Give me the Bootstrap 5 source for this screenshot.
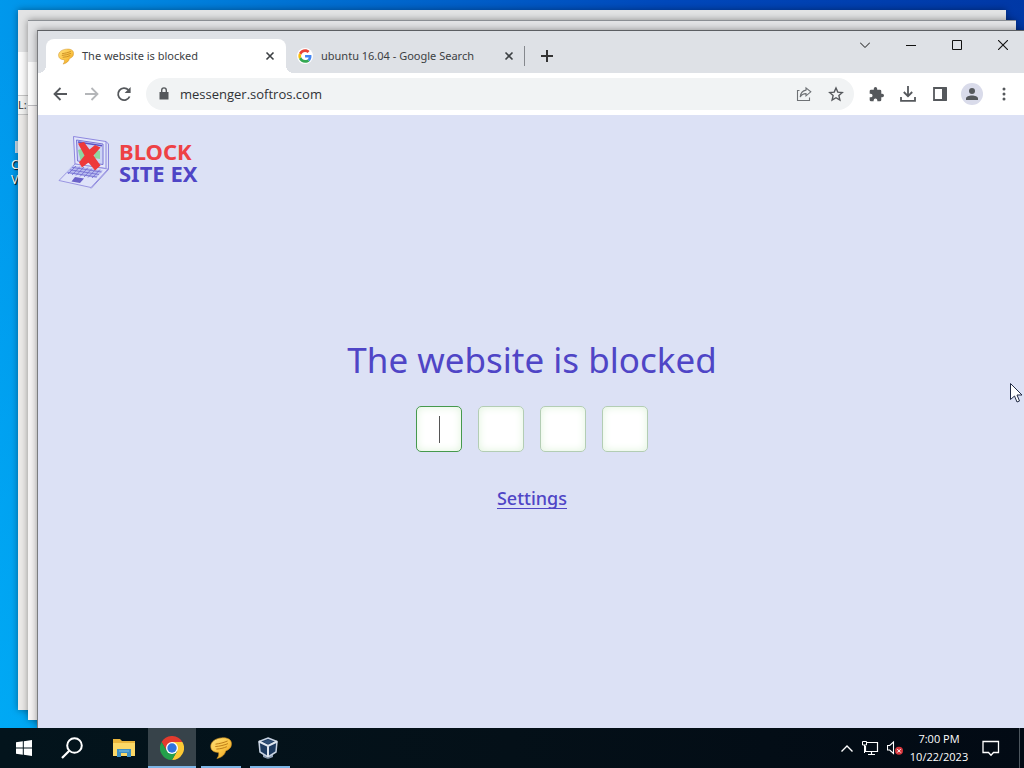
<!DOCTYPE html>
<html lang="en">
<head>
<meta charset="utf-8">
<meta name="viewport" content="width=device-width, initial-scale=1">
<title>The website is blocked</title>
<link href="https://cdn.jsdelivr.net/npm/bootstrap@5.3.0/dist/css/bootstrap.min.css" rel="stylesheet">
<style>
  :root { --brand: #4f45c6; }
  body { font-family: "Noto Sans", "Open Sans", sans-serif; font-size: 11px; line-height: 16px; color: #3c4043; }
  svg { display: block; flex: none; }
  button { border: 0; background: none; padding: 0; color: inherit; }

  /* desktop and the windows lying on it */
  .desktop { background: linear-gradient(180deg, transparent 30px, rgba(0,190,255,.45)), linear-gradient(90deg, #0098ec, #0070d2 30%, #0048bb 65%, #0038a6); }
  .desk-label { left: 11px; top: 157px; color: #fff; font-size: 12px; line-height: 15px; text-shadow: 1px 1px 1px #000; }
  .desk-icon { left: 15px; top: 141px; width: 8px; height: 12px; background: #c9dcec; }
  .win { box-shadow: 0 0 7px rgba(0,0,0,.4); }
  .win-a { inset: 10px 18px 18px 18px; background: linear-gradient(#e2e3e4 42px, #fbfbfb 42px 85px, #c4c4c4 85px 86px, #f2f2f1 86px 104px, #c4c4c4 104px 105px, #ebe9e7 105px); padding-top: 87px; color: #333; }
  .win-b { inset: 20px 8px 8px 28px; border-top: 1px solid #8b8f94; background: linear-gradient(#e2e3e5 41px, #fbfbfb 41px 84px, #bcbcc0 84px 85px, #f5f3f3 85px); }
  .win-front { inset: 30px -2px 0 37px; border-top: 1px solid #5c5f63; border-left: 1px solid #7b7d80; background: #dce1f5; }

  /* browser chrome */
  .tabstrip { height: 42px; background: #dee1e6; padding: 8px 0 0 8px; }
  .tab { height: 34px; position: relative; }
  .tab-active { width: 240px; padding: 0 7px 0 12px; background: #fff; border-radius: 8px 8px 0 0; }
  .tab-active::before, .tab-active::after { content: ""; position: absolute; bottom: 0; width: 8px; height: 8px; }
  .tab-active::before { left: -8px; background: radial-gradient(circle at 0 0, transparent 8px, #fff 8px); }
  .tab-active::after { right: -8px; background: radial-gradient(circle at 100% 0, transparent 8px, #fff 8px); }
  .tab-idle { width: 239px; padding: 0 7px 0 11px; }
  .tab-idle::after { content: ""; position: absolute; right: 0; top: 7px; height: 20px; width: 1px; background: #85888d; }
  .tab-new { width: 28px; height: 34px; margin-left: 8px; color: #333; }
  .win-ctl { margin-top: -8px; }
  .win-ctl button { width: 46px; height: 28px; color: #111; }
  .tools { height: 42px; background: #fff; padding: 0 6px; }
  .tool { width: 32px; height: 32px; color: #55585c; flex: none; }
  .address { height: 32px; background: #f1f3f4; border-radius: 16px; margin: 0 6px; padding: 0 2px 0 10px; }
  .address input { background: none; border: 0; outline: 0; font-family: "Open Sans", "Noto Sans", sans-serif; font-size: 13px; line-height: 20px; color: #303236; padding: 0; margin-left: 8px; min-width: 0; }
  .avatar { width: 22px; height: 22px; background: #d9dbea; }

  /* blocked page */
  .site-head { height: 80px; padding: 20px 20px 0; }
  .site-name { font-family: "Noto Sans", sans-serif; font-weight: 700; font-size: 22px; line-height: 22px; margin-left: 9px; padding-top: 5px; color: var(--brand); }
  .site-name .word-block { color: #ee4145; }
  .blocked { padding: 2px 0 80px; color: var(--brand); }
  .blocked h1 { font-family: "Noto Sans", sans-serif; font-weight: 400; font-size: 35px; line-height: 48px; margin: 0 0 22px; }
  .pin { width: 46px; height: 46px; border: 1px solid #b3cdb4; border-radius: 5px; background: #fff; box-shadow: inset 0 0 8px #dff3dc; text-align: center; outline: 0; }
  .pin-now { border-color: #46994d; background: linear-gradient(#555, #555) center / 1px 27px no-repeat #fff; }
  .settings { font-family: "Noto Sans", sans-serif; font-weight: 500; font-size: 18px; line-height: 20px; margin-top: 36px; color: var(--brand); text-decoration: none; border-bottom: 1px solid; }

  /* taskbar */
  .taskbar { height: 40px; background: linear-gradient(90deg, #03141c, #041018 50%, #020a14); color: #fff; font-family: "Open Sans", "Noto Sans", sans-serif; }
  .task { width: 48px; height: 40px; flex: none; position: relative; }
  .task-run + .task-run { margin-left: 1px; }
  .task-run::after { content: ""; position: absolute; left: 4px; right: 4px; bottom: 0; height: 2px; background: #7db5e6; }
  .task-on { background: #37434a; }
  .task-on::after { left: 0; right: 0; }
  .clock { width: 62px; line-height: 18px; margin-right: 8px; }
  .peek { width: 5px; height: 40px; border-left: 1px solid #4d565e; margin-left: 19px; }
  .pointer { left: 1009px; top: 382px; }
</style>
</head>
<body class="vh-100 overflow-hidden d-flex flex-column">

<svg width="0" height="0" class="position-absolute" aria-hidden="true">
  <defs>
    <linearGradient id="gold" x1="0" y1="0" x2="1" y2="1"><stop offset="0" stop-color="#ffe07a"/><stop offset=".55" stop-color="#fbc544"/><stop offset="1" stop-color="#e79a1c"/></linearGradient>
    <symbol id="bubble" viewBox="0 0 20 20">
      <path d="M10.500 .8C16 .3 19.600 2.300 19.500 6.300C19.400 10 17 11.600 14.200 12.700C13.700 15.600 11.200 18.500 6.300 19.500C8 17.500 8.300 15.600 7.800 14C3.200 14 .7 12.100.7 8.400C.7 4.500 4.600 1.300 10.500.8Z" fill="url(#gold)" stroke="#d0901f" stroke-width=".6"/>
      <path d="M5 6.500C9 6 13 5 16 3.600M4.800 8.700C9 8.400 13 7.400 16.300 6M5.800 11C9.500 10.800 12.500 10 15.300 8.800" fill="none" stroke="#bd7d18" stroke-width=".9"/>
    </symbol>
    <symbol id="x" viewBox="0 0 10 10"><path d="M1.500 1.500l7 7M8.500 1.500l-7 7" stroke="#3c4043" stroke-width="1.600"/></symbol>
  </defs>
</svg>

<main class="desktop flex-grow-1 position-relative overflow-hidden">
  <div class="desk-icon position-absolute"></div>
  <div class="desk-label position-absolute">C<br>V</div>
  <div class="win win-a position-absolute">L:</div>
  <div class="win win-b position-absolute"></div>

  <section class="win win-front position-absolute d-flex flex-column">
    <div class="tabstrip d-flex">
      <div class="tab tab-active d-flex align-items-center">
        <svg width="16" height="17"><use href="#bubble"/></svg>
        <span class="flex-grow-1 ms-2 text-nowrap">The website is blocked</span>
        <button aria-label="Close tab" class="p-1"><svg width="10" height="10"><use href="#x"/></svg></button>
      </div>
      <div class="tab tab-idle d-flex align-items-center">
        <svg width="16" height="16" viewBox="0 0 48 48"><circle cx="24" cy="24" r="24" fill="#fff"/><g transform="translate(4 4) scale(.84)"><path fill="#EA4335" d="M24 9.500c3.540 0 6.710 1.220 9.210 3.600l6.850-6.850C35.900 2.380 30.470 0 24 0 14.620 0 6.510 5.380 2.560 13.220l7.980 6.190C12.430 13.720 17.740 9.500 24 9.500z"/><path fill="#4285F4" d="M46.980 24.550c0-1.570-.15-3.090-.38-4.550H24v9.020h12.940c-.58 2.960-2.260 5.480-4.780 7.180l7.730 6c4.510-4.180 7.090-10.360 7.090-17.650z"/><path fill="#FBBC05" d="M10.530 28.590c-.48-1.450-.76-2.990-.76-4.590s.27-3.140.76-4.590l-7.980-6.190C.92 16.460 0 20.120 0 24c0 3.880.92 7.540 2.560 10.780l7.970-6.190z"/><path fill="#34A853" d="M24 48c6.480 0 11.930-2.130 15.890-5.810l-7.730-6c-2.150 1.450-4.920 2.300-8.160 2.300-6.260 0-11.570-4.220-13.470-9.910l-7.980 6.190C6.510 42.620 14.620 48 24 48z"/></g></svg>
        <span class="flex-grow-1 ms-2 text-nowrap">ubuntu 16.04 - Google Search</span>
        <button aria-label="Close tab" class="p-1"><svg width="10" height="10"><use href="#x"/></svg></button>
      </div>
      <button class="tab-new d-flex align-items-center justify-content-center" aria-label="New tab"><svg width="12" height="12"><path d="M6 0v12M0 6h12" stroke="currentColor" stroke-width="2"/></svg></button>
      <div class="win-ctl d-flex ms-auto">
        <button class="d-flex align-items-center justify-content-center" aria-label="Search tabs"><svg width="10" height="6"><path d="M0 .5l5 5 5-5" fill="none" stroke="currentColor"/></svg></button>
        <button class="d-flex align-items-center justify-content-center" aria-label="Minimize"><svg width="10" height="1"><path d="M0 .5h10" stroke="currentColor"/></svg></button>
        <button class="d-flex align-items-center justify-content-center" aria-label="Maximize"><svg width="10" height="10"><path d="M.5.5h9v9h-9z" fill="none" stroke="currentColor"/></svg></button>
        <button class="d-flex align-items-center justify-content-center" aria-label="Close"><svg width="10" height="10"><path d="M0 0l10 10M10 0L0 10" stroke="currentColor" stroke-width="1.100"/></svg></button>
      </div>
    </div>

    <div class="tools d-flex align-items-center">
      <button class="tool d-flex align-items-center justify-content-center" aria-label="Back"><svg width="14" height="14"><path d="M14 7H1.500M7.500 1L1.500 7l6 6" fill="none" stroke="currentColor" stroke-width="1.800"/></svg></button>
      <button class="tool d-flex align-items-center justify-content-center" aria-label="Forward" disabled><svg width="14" height="14"><path d="M0 7h12.500M6.500 1l6 6-6 6" fill="none" stroke="#b4b6b9" stroke-width="1.800"/></svg></button>
      <button class="tool d-flex align-items-center justify-content-center" aria-label="Reload"><svg width="16" height="16"><path d="M13.600 10.500A6 6 0 1 1 12.400 3.900" fill="none" stroke="currentColor" stroke-width="1.800"/><path d="M14.600 1v6H8.600z" fill="currentColor"/></svg></button>
      <div class="address d-flex align-items-center flex-grow-1">
        <svg width="16" height="16"><path d="M3.500 6h9v7.500h-9z" fill="#55585c"/><path d="M5.700 7V4.200a2.300 2.300 0 0 1 4.600 0V7" fill="none" stroke="#55585c" stroke-width="1.400"/></svg>
        <input type="text" class="flex-grow-1" aria-label="Address" value="messenger.softros.com">
        <button class="tool d-flex align-items-center justify-content-center" aria-label="Share"><svg width="16" height="16"><path d="M3.500 4.500H1.500v10h12v-3M10 1.800l4.800 4-4.800 4V7.600C7.500 7.600 5.500 8.500 4.200 11 4.600 7 7 4.500 10 4.100z" fill="none" stroke="#6e7175" stroke-width="1.100"/></svg></button>
        <button class="tool d-flex align-items-center justify-content-center" aria-label="Bookmark"><svg width="16" height="16"><path d="M8 2l1.800 4.100 4.500.5-3.400 3 1 4.400L8 11.700 4.100 14l1-4.400-3.400-3 4.500-.5z" fill="none" stroke="currentColor" stroke-width="1.400"/></svg></button>
      </div>
      <button class="tool d-flex align-items-center justify-content-center" aria-label="Extensions"><svg width="15" height="15" viewBox="1 1 22 22"><path d="M20.500 11H19V7a2 2 0 0 0-2-2h-4V3.500a2.500 2.500 0 0 0-5 0V5H4a2 2 0 0 0-2 2v3.800h1.500a2.700 2.700 0 0 1 0 5.400H2V20a2 2 0 0 0 2 2h3.800v-1.500a2.700 2.700 0 0 1 5.400 0V22H17a2 2 0 0 0 2-2v-4h1.500a2.500 2.500 0 0 0 0-5z" fill="currentColor"/></svg></button>
      <button class="tool d-flex align-items-center justify-content-center" aria-label="Downloads"><svg width="16" height="16"><path d="M8 0v10M3.800 6L8 10.200 12.200 6M1 11v3.800h14V11" fill="none" stroke="currentColor" stroke-width="1.800"/></svg></button>
      <button class="tool d-flex align-items-center justify-content-center" aria-label="Side panel"><svg width="14" height="14"><path d="M1 1h12v12H1z" fill="none" stroke="currentColor" stroke-width="1.800"/><path d="M9 1h5v12H9z" fill="currentColor"/></svg></button>
      <button class="tool d-flex align-items-center justify-content-center" aria-label="Profile"><span class="avatar rounded-circle d-flex align-items-center justify-content-center"><svg width="12" height="12"><circle cx="6" cy="3" r="3" fill="currentColor"/><path d="M0 12V10.500C0 8.500 3 7.500 6 7.500s6 1 6 3V12z" fill="currentColor"/></svg></span></button>
      <button class="tool d-flex align-items-center justify-content-center" aria-label="Menu"><svg width="4" height="14"><g fill="currentColor"><circle cx="2" cy="2" r="1.500"/><circle cx="2" cy="7" r="1.500"/><circle cx="2" cy="12" r="1.500"/></g></svg></button>
    </div>

    <header class="site-head d-flex">
      <svg width="52" height="54" viewBox="0 0 52 54">
        <path d="M15.500 1.500L48 6.500v27L17 29z" fill="#e2e6fa" stroke="#847ddb" stroke-width=".9"/>
        <path d="M48 6.500l2.500 2.500v25.500L33 53.500" fill="none" stroke="#847ddb" stroke-width=".9"/>
        <path d="M18.500 5L45 9v20.500L19.500 26z" fill="#cdd3f5" stroke="#7069d0" stroke-width=".9"/>
        <path d="M20 7l24 3.700" stroke="#5d54c6" stroke-width="1.400"/>
        <path d="M20 15l6-2 3 10-6 4zM37 14.500l5 1.500v8l-6-1z" fill="#8ed6a2"/>
        <path d="M17 29l33 5-17 18.500L1 45.500z" fill="#dfe3f9" stroke="#928cdf" stroke-width=".9"/>
        <path d="M14.500 30.500l30.500 5-7 7.500L7.500 38z" fill="#b9bdf0"/>
        <path d="M14 32.300l29.500 4.700M12 34.800l29 4.700M9.500 37.500l29.500 4.500M18 31l-8 8M22 31.500l-8 8.500M26 32l-8 8.500M30 32.500l-8 9M34 33.500l-8 8.500M38 34l-8 8.500M42 34.500l-8 8.500" stroke="#7069d0" stroke-width=".8"/>
        <path d="M17 42l9 1.500-4 4.500-8.500-1.600z" fill="#6a61c8"/>
        <path d="M20 8.500l6-1.500 5.500 7.500 5.500-4.500 5.500 2.500-7 8L42.500 30.500l-5.500 5L30.500 27.500l-6.500 5-3-5 5.500-7z" fill="#ed393b"/>
      </svg>
      <div class="site-name"><span class="word-block">BLOCK</span><br>SITE EX</div>
    </header>

    <form class="blocked flex-grow-1 d-flex flex-column align-items-center justify-content-center">
      <h1>The website is blocked</h1>
      <div class="d-flex gap-3">
        <input class="pin pin-now" type="password" maxlength="1" aria-label="Digit 1">
        <input class="pin" type="password" maxlength="1" aria-label="Digit 2">
        <input class="pin" type="password" maxlength="1" aria-label="Digit 3">
        <input class="pin" type="password" maxlength="1" aria-label="Digit 4">
      </div>
      <a class="settings" href="#settings">Settings</a>
    </form>
  </section>

  <svg class="pointer position-absolute" width="14" height="22"><path d="M1.500 1.500v16l4-3.500 2.500 6 2.500-1-2.500-6h5z" fill="#fff" stroke="#222b45"/></svg>
</main>

<footer class="taskbar d-flex align-items-center flex-shrink-0">
  <button class="task d-flex align-items-center justify-content-center" aria-label="Start"><svg width="16" height="16"><path d="M0 2.300L6.800 1.300V7.500H0zM7.800 1.200L16 0v7.500H7.800zM0 8.500h6.800v6.200L0 13.700zM7.800 8.500H16V16l-8.200-1.200z" fill="#fff"/></svg></button>
  <button class="task d-flex align-items-center justify-content-center" aria-label="Search"><svg width="22" height="22"><circle cx="13.500" cy="8.500" r="7.300" fill="none" stroke="#fff" stroke-width="2"/><path d="M8.300 13.700L1 21" stroke="#fff" stroke-width="2.200"/></svg></button>
  <button class="task d-flex align-items-center justify-content-center ms-1" aria-label="File Explorer"><svg width="22" height="18"><path d="M0 0h7l2 2h13v15H0z" fill="#e9b53c"/><path d="M0 4h22v13H0z" fill="#fbd867"/><path d="M4 18v-8h14v8h-4v-4H8v4z" fill="#3d8fc4"/><path d="M6 12h10" stroke="#7cc2e6"/></svg></button>
  <button class="task task-run task-on d-flex align-items-center justify-content-center" aria-label="Chrome"><svg width="24" height="24" viewBox="0 0 24 24"><path d="M17.200 15L12 24A12 12 0 0 0 22.400 6H12z" fill="#fcc934"/><path d="M12 6h10.400A12 12 0 0 0 1.600 6l5.200 9z" fill="#e33b2e"/><path d="M6.800 15L1.600 6A12 12 0 0 0 12 24l5.200-9z" fill="#24a04b"/><circle cx="12" cy="12" r="6" fill="#fff"/><circle cx="12" cy="12" r="4.700" fill="#2f73de"/></svg></button>
  <button class="task task-run d-flex align-items-center justify-content-center" aria-label="Softros Messenger"><svg width="22" height="22"><use href="#bubble"/></svg></button>
  <button class="task task-run d-flex align-items-center justify-content-center pe-1" aria-label="VirtualBox"><svg width="20" height="22"><path d="M5 17l5 4.500 5-4.500v3l-5 2-5-2z" fill="#8fa0b8"/><path d="M10 1l9 3.500-1 10.500-8 5-8-5L1 4.500z" fill="#1d3a5f" stroke="#c8d3e2" stroke-width="1.500"/><path d="M1 4.500l9 4.500 9-4.500M10 9v11" fill="none" stroke="#dfe6ef" stroke-width="2"/><path d="M10 2.700l5 2.100-5 2.300-5-2.300z" fill="#2f4f77"/></svg></button>

  <div class="ms-auto d-flex align-items-center">
    <button aria-label="Hidden icons"><svg width="12" height="7"><path d="M.5 6.500L6 1l5.500 5.500" fill="none" stroke="#fff" stroke-width="1.400"/></svg></button>
    <button class="ms-2" aria-label="Network"><svg width="18" height="16"><path d="M5.500 2.500h11v9h-12V6M10.500 11.500v3M7 14.500h7" fill="none" stroke="#fff" stroke-width="1.200"/><path d="M1.500 1.500h4v3.500h-4zM3.500 5v8" fill="none" stroke="#fff"/></svg></button>
    <button class="ms-1 ps-1" aria-label="Volume"><svg width="17" height="16"><path d="M.5 5.500h2.200L6.500 2v11.500L2.700 10H.5z" fill="none" stroke="#fff" stroke-width="1.100"/><circle cx="12" cy="10.800" r="4" fill="#d6363c"/><path d="M10.300 9.100l3.400 3.400M13.700 9.100l-3.400 3.400" stroke="#fff"/></svg></button>
    <div class="clock text-center ms-1">7:00 PM<br>10/22/2023</div>
    <button class="ms-1" aria-label="Notifications"><svg width="18" height="18"><path d="M1 2.500h15.500v11h-5L9 16.300 6.500 13.500H1z" fill="none" stroke="#fff" stroke-width="1.300"/></svg></button>
    <div class="peek"></div>
  </div>
</footer>

<script src="https://cdn.jsdelivr.net/npm/bootstrap@5.3.0/dist/js/bootstrap.bundle.min.js"></script>
</body>
</html>
